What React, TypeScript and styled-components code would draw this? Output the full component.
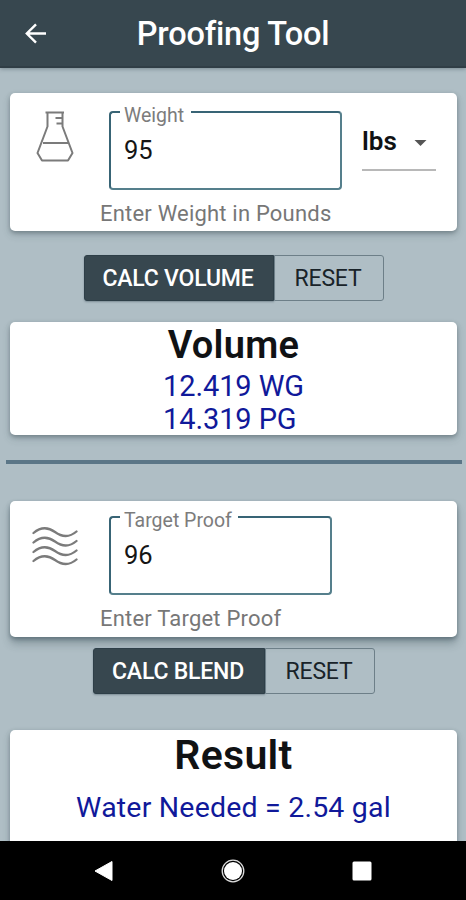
import React from 'react';
import styled, { createGlobalStyle } from 'styled-components';

const GlobalStyle = createGlobalStyle`
  *, *::before, *::after { box-sizing: border-box; }
  body { margin: 0; background: #afbec5; }
`;

const Screen = styled.div`
  width: 466px;
  height: 900px;
  overflow: hidden;
  display: flex;
  flex-direction: column;
  background: #afbec5;
  font-family: Roboto, sans-serif;
  color: #101214;
`;

const AppBar = styled.header`
  height: 68px;
  flex: none;
  display: grid;
  grid-template-columns: 70px 1fr 70px;
  align-items: center;
  background: #37474f;
  border-bottom: 2px solid #303e46;
  box-shadow: 0 1px 4px rgba(40, 60, 70, 0.4);
`;

const BackButton = styled.button`
  border: 0;
  padding: 0;
  background: none;
  height: 24px;
  display: flex;
  padding-left: 24px;
`;

const Title = styled.h1`
  margin: 0;
  padding-top: 2px;
  font-size: 32.5px;
  line-height: 40px;
  font-weight: 500;
  letter-spacing: -0.2px;
  text-align: center;
  white-space: nowrap;
  color: #fff;
`;

const Content = styled.main`
  flex: 1;
  min-height: 0;
  overflow: hidden;
  padding: 25px 9px 0 10px;
`;

const Card = styled.section<{ $height: number; $deep?: boolean }>`
  height: ${p => p.$height}px;
  background: #fff;
  border-radius: 5px;
  box-shadow: ${p => p.$deep
    ? '0 2px 4px rgba(40, 60, 70, 0.45), 0 7px 9px rgba(40, 60, 70, 0.28)'
    : '0 2px 4px rgba(60, 75, 80, 0.42), 0 4px 8px rgba(40, 60, 70, 0.16)'};
`;

const InputCard = styled(Card)<{ $top: number }>`
  display: grid;
  grid-template-columns: 89px 253px 1fr;
  padding-top: ${p => p.$top}px;
`;

const IconSlot = styled.div<{ $top: number }>`
  padding-top: ${p => p.$top}px;
  display: flex;
  justify-content: center;
  align-items: flex-start;
`;

const Field = styled.div`
  display: flex;
  flex-direction: column;
`;

const Outline = styled.label<{ $width: number }>`
  position: relative;
  display: block;
  width: ${p => p.$width}px;
  height: 79px;
  margin-left: 10px;
  border: 2px solid #557f8c;
  border-top-color: #386475;
  border-left-color: #386475;
  border-radius: 4px;
  padding: 22px 13px 0;
`;

const FloatingLabel = styled.span<{ $width: number }>`
  position: absolute;
  left: 9px;
  top: -8px;
  width: ${p => p.$width}px;
  padding-left: 4px;
  background: #fff;
  font-size: 19.5px;
  line-height: 22px;
  white-space: nowrap;
  color: #7c7c7c;
`;

const Input = styled.input`
  display: block;
  width: 100%;
  height: 30px;
  padding: 0;
  border: 0;
  outline: 0;
  background: transparent;
  font: 400 25.5px/30px Roboto, sans-serif;
  color: #151515;
`;

const Helper = styled.span`
  margin: 11px 0 0 1px;
  font-size: 22px;
  line-height: 26px;
  letter-spacing: 0.2px;
  white-space: nowrap;
  color: #777;
`;

const Unit = styled.div`
  width: 74px;
  height: 60px;
  margin-left: 10px;
  padding: 16px 9px 0 0;
  display: flex;
  justify-content: space-between;
  border-bottom: 2px solid #b8b8b8;
  font-size: 26px;
  line-height: 28px;
  font-weight: 600;
`;

const Caret = styled.svg`
  margin-top: 12px;
`;

const ButtonGroup = styled.div<{ $top: number; $bottom: number; $left: number }>`
  display: flex;
  height: 46px;
  margin: ${p => p.$top}px 0 ${p => p.$bottom}px ${p => p.$left}px;
`;

const ActionButton = styled.button<{ $width: number; $primary?: boolean }>`
  width: ${p => p.$width}px;
  height: 46px;
  padding: 2px 2px 0 0;
  border: ${p => (p.$primary ? '1px solid #2e3f48' : '1px solid #6d7f88')};
  border-radius: ${p => (p.$primary ? '3px 0 0 3px' : '0 3px 3px 0')};
  background: ${p => (p.$primary ? '#37474f' : 'transparent')};
  box-shadow: ${p => (p.$primary ? '0 1px 2px rgba(30, 50, 60, 0.35)' : 'none')};
  color: ${p => (p.$primary ? '#fff' : '#192329')};
  font: ${p => (p.$primary ? 500 : 400)} 23px/42px Roboto, sans-serif;
  letter-spacing: -0.2px;
  white-space: nowrap;
`;

const ResultTitle = styled.h2<{ $size: number; $line: number; $spacing: number }>`
  margin: 0;
  font-size: ${p => p.$size}px;
  line-height: ${p => p.$line}px;
  letter-spacing: ${p => p.$spacing}px;
  font-weight: 600;
  text-align: center;
`;

const Values = styled.div`
  padding: 1px 0 0 153px;
  font-size: 29px;
  line-height: 33px;
  letter-spacing: -0.1px;
  color: #10199a;
`;

const Summary = styled.p`
  margin: 10px 0 0;
  font-size: 28.5px;
  line-height: 36px;
  letter-spacing: 0.2px;
  text-align: center;
  white-space: nowrap;
  color: #10199a;
`;

const Divider = styled.hr`
  margin: 25px -5px 37px -4px;
  height: 4px;
  border: 0;
  background: #5b7687;
`;

const NavBar = styled.nav`
  flex: none;
  height: 59px;
  background: #000;
  display: flex;
  justify-content: space-between;
  align-items: center;
  padding: 0 94px 0 94px;
`;

export default function App() {
  return (
    <Screen>
      <GlobalStyle />
      <AppBar>
        <BackButton aria-label="Back">
          <svg width="24" height="24" viewBox="0 0 24 24" fill="none" stroke="#fff" strokeWidth="2.4">
            <path d="M22 12.500H3M12 3.300L2.800 12.500l9.200 9.200" />
          </svg>
        </BackButton>
        <Title>Proofing Tool</Title>
      </AppBar>
      <Content>
        <InputCard as="section" $height={138} $top={18}>
          <IconSlot $top={0}>
            <svg width="38" height="51" viewBox="0 0 38 51" fill="none" stroke="#7b7b7b" strokeWidth="2" strokeLinejoin="round">
              <path d="M9.500 1.500H28M11.500 2v13.500L1.500 42l4.500 7.500h26l4.500-7.500L26.500 15.500V2M7 32h25M19.500 7h7M20.500 12.500h6" />
            </svg>
          </IconSlot>
          <Field>
            <Outline $width={233}>
              <FloatingLabel $width={71}>Weight</FloatingLabel>
              <Input defaultValue="95" />
            </Outline>
            <Helper>Enter Weight in Pounds</Helper>
          </Field>
          <Unit>
            lbs
            <Caret width="13" height="8" viewBox="0 0 13 8"><path d="M.5 1h12L6.500 7z" fill="#555" /></Caret>
          </Unit>
        </InputCard>

        <ButtonGroup $top={24} $bottom={21} $left={74}>
          <ActionButton $primary $width={190}>CALC VOLUME</ActionButton>
          <ActionButton $width={110}>RESET</ActionButton>
        </ButtonGroup>

        <Card $height={113}>
          <ResultTitle $size={38} $line={47} $spacing={0.3}>Volume</ResultTitle>
          <Values>
            <div>12.419 WG</div>
            <div>14.319 PG</div>
          </Values>
        </Card>

        <Divider />

        <InputCard as="section" $height={136} $top={15} $deep>
          <IconSlot $top={10}>
            <svg width="46" height="41" viewBox="0 0 46 41" fill="none" stroke="#7b7b7b" strokeWidth="2.3" strokeLinecap="round">
              {[7, 16.500, 26, 35].map(y => (
                <path key={y} d={`M1.500 ${y}c7-6 14-6.500 21.500-1s14.500 5.500 21.500-.5`} />
              ))}
            </svg>
          </IconSlot>
          <Field>
            <Outline $width={223}>
              <FloatingLabel $width={118}>Target Proof</FloatingLabel>
              <Input defaultValue="96" />
            </Outline>
            <Helper>Enter Target Proof</Helper>
          </Field>
        </InputCard>

        <ButtonGroup $top={11} $bottom={36} $left={83}>
          <ActionButton $primary $width={172}>CALC BLEND</ActionButton>
          <ActionButton $width={110}>RESET</ActionButton>
        </ButtonGroup>

        <Card $height={150}>
          <ResultTitle $size={41} $line={50} $spacing={0.3}>Result</ResultTitle>
          <Summary>Water Needed = 2.54 gal</Summary>
        </Card>
      </Content>
      <NavBar>
        <svg width="20" height="22" viewBox="0 0 20 22"><path d="M1 11L18 1.500v19z" fill="#fff" stroke="#fff" strokeLinejoin="round" /></svg>
        <svg width="24" height="24" viewBox="0 0 24 24">
          <circle cx="12" cy="12" r="10.800" fill="none" stroke="#ddd" strokeWidth="1.300" />
          <circle cx="12" cy="12" r="9" fill="#fff" />
        </svg>
        <svg width="20" height="20" viewBox="0 0 20 20"><rect x=".5" y=".5" width="19" height="19" rx="1.500" fill="#fff" /></svg>
      </NavBar>
    </Screen>
  );
}
